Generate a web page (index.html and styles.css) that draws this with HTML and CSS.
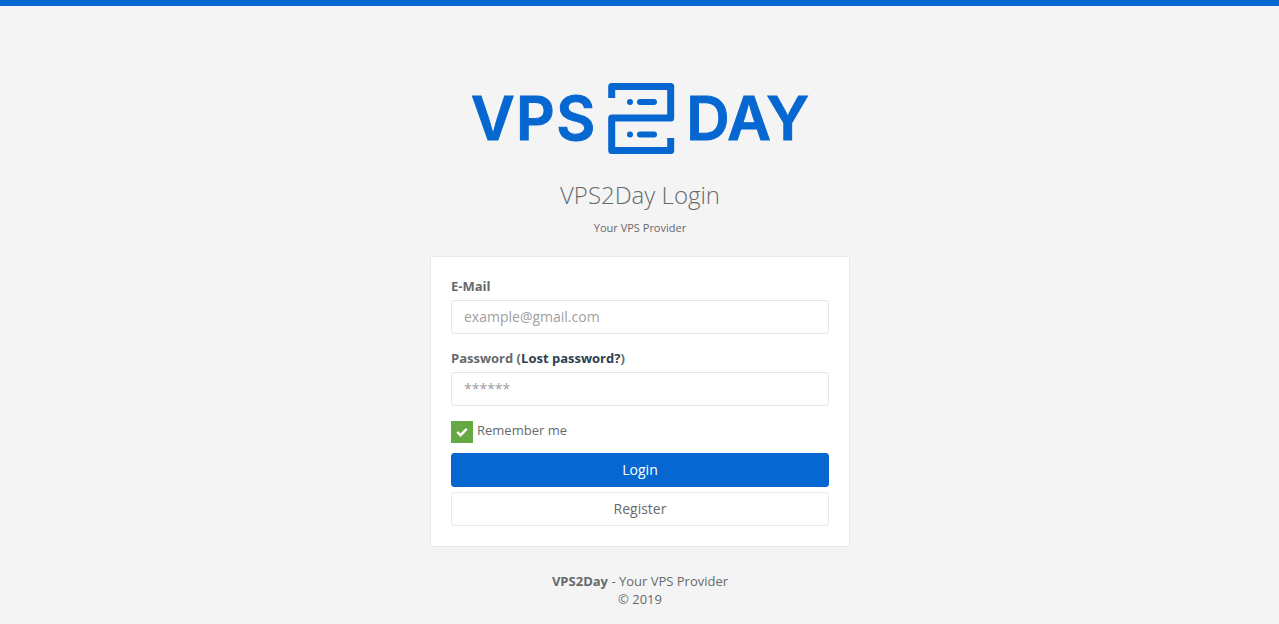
FILE: index.html
```html
<!DOCTYPE html>
<html lang="en">
<head>
<meta charset="utf-8">
<title>VPS2Day Login</title>
<link rel="stylesheet" href="styles.css">
</head>
<body>
<div class="topbar"></div>
<main class="page">
  <div class="logo">
    <span class="logo-word logo-word-wide">VPS</span>
    <svg class="logo-icon" width="67" height="71" viewBox="0 0 67 71" fill="none">
      <path d="M3.700 15V3.500H62.700V35H3.700V67.500H62.700V55" stroke="#0667d0" stroke-width="7" stroke-linejoin="round" stroke-linecap="butt"/>
      <circle cx="22" cy="19" r="3" fill="#0667d0"/>
      <rect x="29" y="16" width="20" height="6" rx="3" fill="#0667d0"/>
      <circle cx="22" cy="51.500" r="3" fill="#0667d0"/>
      <rect x="29" y="48.500" width="20" height="6" rx="3" fill="#0667d0"/>
    </svg>
    <span class="logo-word">DAY</span>
  </div>
  <h1 class="title">VPS2Day Login</h1>
  <p class="subtitle">Your VPS Provider</p>
  <form class="card">
    <label class="label" for="email">E-Mail</label>
    <input class="input" id="email" type="text" placeholder="example@gmail.com">
    <label class="label label-second" for="password">Password (<a class="link" href="#">Lost password?</a>)</label>
    <input class="input" id="password" type="text" placeholder="******">
    <div class="remember">
      <span class="check">
        <svg width="12" height="10" viewBox="0 0 12 10" fill="none"><path d="M1.200 5L4.500 8.200L10.800 1.800" stroke="#fff" stroke-width="2.400"/></svg>
      </span>
      <span class="remember-text">Remember me</span>
    </div>
    <button class="btn btn-primary" type="button">Login</button>
    <button class="btn btn-default" type="button">Register</button>
  </form>
  <footer class="footer">
    <div><strong>VPS2Day</strong> - Your VPS Provider</div>
    <div>© 2019</div>
  </footer>
</main>
</body>
</html>
```
FILE: styles.css
```css
* { box-sizing: border-box; }
html, body { margin: 0; height: 100%; }
body {
  background: #f4f4f4;
  color: #676a6c;
  font-family: "Open Sans", sans-serif;
  font-size: 13px;
  overflow: hidden;
}
.topbar { height: 6px; background: #0667d0; }
.page { width: 1280px; display: flex; flex-direction: column; align-items: center; }
.logo { display: flex; align-items: center; margin-top: 77px; height: 71px; }
.logo-word {
  font-family: Inter, sans-serif;
  font-weight: 600;
  font-size: 60px;
  line-height: 71px;
  color: #0667d0;
  -webkit-text-stroke: 1px #0667d0;
}
.logo-word-wide { letter-spacing: 1.5px; }
.logo-icon { display: block; margin: 0 11px 0 11.5px; }
.title { margin: 24px 0 0; font-size: 24px; font-weight: 300; line-height: 33px; }
.subtitle { margin: 9px 0 0; font-size: 11px; line-height: 15px; }
.card {
  width: 420px;
  height: 291px;
  margin-top: 21px;
  padding: 20px;
  background: #fff;
  border: 1px solid #e7e7e7;
  border-radius: 3px;
  display: flex;
  flex-direction: column;
}
.label { font-weight: 700; line-height: 18px; margin-bottom: 5px; }
.label-second { margin-top: 15px; }
.link { color: #2f4050; text-decoration: none; }
.input {
  height: 34px;
  padding: 0 12px 2px;
  border: 1px solid #e5e6e7;
  border-radius: 3px;
  background: #fff;
  color: #676a6c;
  font: 14px "Open Sans", sans-serif;
  outline: none;
}
.input::placeholder { color: #a0a0a0; opacity: 1; }
.remember { display: flex; align-items: center; gap: 4px; margin-top: 15px; height: 22px; }
.remember-text { line-height: 18px; margin-bottom: 5px; }
.check {
  width: 22px;
  height: 22px;
  background: #65a844;
  display: flex;
  align-items: center;
  justify-content: center;
}
.btn {
  height: 34px;
  padding: 0 0 2px;
  border-radius: 3px;
  font: 14px "Open Sans", sans-serif;
  cursor: pointer;
}
.btn-primary { margin-top: 10px; background: #0667d0; border: 1px solid #0667d0; color: #fff; }
.btn-default { margin-top: 5px; background: #fff; border: 1px solid #e7eaec; color: #676a6c; }
.footer { margin-top: 25px; text-align: center; line-height: 18px; }
```
